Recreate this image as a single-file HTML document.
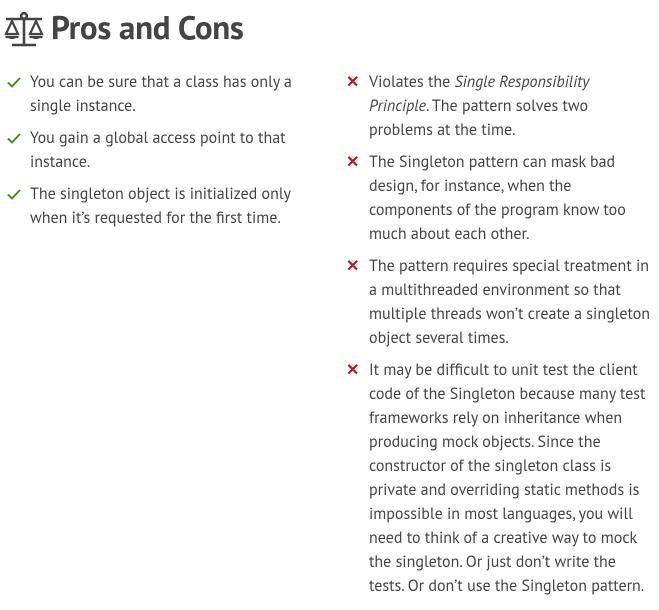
<!DOCTYPE html>
<html><head><meta charset="utf-8"><style>
body{margin:0;background:#fff;font-family:"PT Sans","Liberation Sans",sans-serif;color:#444;}
h2{position:absolute;left:51px;top:6px;margin:0;font-size:33px;font-weight:bold;color:#444;letter-spacing:-0.3px;}
.ic{position:absolute;left:3px;top:10px;}
.col{position:absolute;top:70px;font-size:16px;line-height:24px;}
.it{position:relative;padding-left:30px;margin-bottom:8px;white-space:nowrap;}
.mk{position:absolute;left:7px;top:0;font-size:16px;}
.ck{position:absolute;left:7px;top:7px;}
.r{color:#c0171e;font-weight:bold;}
</style></head><body>
<svg class="ic" width="44" height="38" viewBox="0 0 44 38" fill="none" stroke="#444" stroke-width="2.6">
<circle cx="21" cy="6" r="2.8"/>
<line x1="3" y1="9" x2="39" y2="9"/>
<line x1="21" y1="9" x2="21" y2="34"/>
<line x1="9" y1="35" x2="33" y2="35"/>
<path d="M9 11 L3 24 H15 Z M2.5 27 H15.5" stroke-width="2.2"/>
<path d="M33 11 L27 24 H39 Z M26.5 27 H39.5" stroke-width="2.2"/>
<path d="M2 26 Q9 32 16 26 Z M26 26 Q33 32 40 26 Z" fill="#444" stroke="none"/>
</svg>
<h2>Pros and Cons</h2>
<div class="col" style="left:0;">
<div class="it"><svg class="ck" width="14" height="11" viewBox="0 0 14 11"><path d="M1 5.5 L5 9.5 L13 1" fill="none" stroke="#4c8b1e" stroke-width="2"/></svg>You can be sure that a class has only a<br>single instance.</div>
<div class="it"><svg class="ck" width="14" height="11" viewBox="0 0 14 11"><path d="M1 5.5 L5 9.5 L13 1" fill="none" stroke="#4c8b1e" stroke-width="2"/></svg>You gain a global access point to that<br>instance.</div>
<div class="it"><svg class="ck" width="14" height="11" viewBox="0 0 14 11"><path d="M1 5.5 L5 9.5 L13 1" fill="none" stroke="#4c8b1e" stroke-width="2"/></svg>The singleton object is initialized only<br>when it’s requested for the first time.</div>
</div>
<div class="col" style="left:339px;">
<div class="it"><span class="mk r">✕</span>Violates the <i>Single Responsibility</i><br><i>Principle</i>. The pattern solves two<br>problems at the time.</div>
<div class="it"><span class="mk r">✕</span>The Singleton pattern can mask bad<br>design, for instance, when the<br>components of the program know too<br>much about each other.</div>
<div class="it"><span class="mk r">✕</span>The pattern requires special treatment in<br>a multithreaded environment so that<br>multiple threads won’t create a singleton<br>object several times.</div>
<div class="it"><span class="mk r">✕</span>It may be difficult to unit test the client<br>code of the Singleton because many test<br>frameworks rely on inheritance when<br>producing mock objects. Since the<br>constructor of the singleton class is<br>private and overriding static methods is<br>impossible in most languages, you will<br>need to think of a creative way to mock<br>the singleton. Or just don’t write the<br>tests. Or don’t use the Singleton pattern.</div>
</div>
</body></html>
